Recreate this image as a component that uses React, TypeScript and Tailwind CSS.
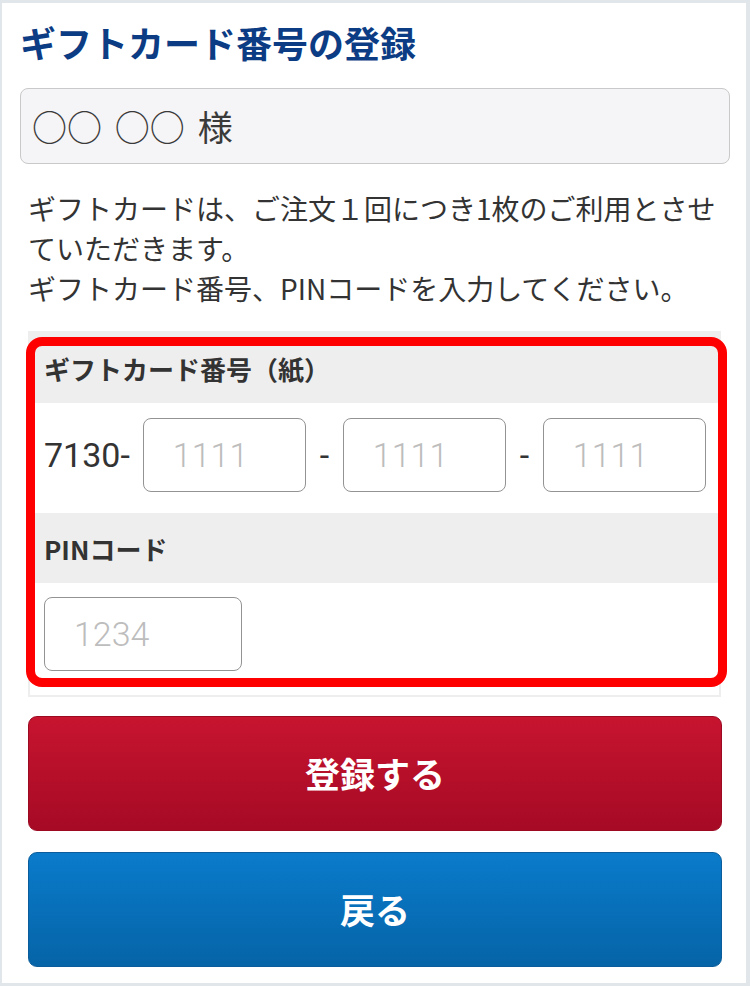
import React from 'react';

const jp = { fontFamily: '"Noto Sans CJK JP", "Noto Sans", sans-serif' };
const num = { fontFamily: 'Roboto, "Liberation Sans", "Noto Sans CJK JP", sans-serif' };

function CodeInput({ placeholder, width }: { placeholder: string; width: string }) {
  return (
    <input
      type="text"
      placeholder={placeholder}
      style={num}
      className={`${width} h-[74px] rounded-[8px] border-[1.5px] border-[#939393] bg-white pl-[29px] text-[34px] font-light text-[#333] outline-none placeholder:text-[#bdbdbd]`}
    />
  );
}

export default function App() {
  return (
    <div
      style={jp}
      className="w-[750px] h-[986px] bg-white border-t-[3px] border-l-2 border-r-[4px] border-b-[3px] border-[#e1e6ea] overflow-hidden"
    >
      <div className="pl-[18px] pr-[16px] pt-[15px]">
        <h1 className="text-[36px] leading-[48px] font-bold text-[#0c3c84]">ギフトカード番号の登録</h1>

        <div className="mt-[22px] h-[76px] rounded-[8px] border-[1.5px] border-[#c9c9c9] bg-[#f5f4f6] flex items-center pl-[11px]">
          <span className="text-[35px] text-[#3a3a3a] [word-spacing:5px]">○○ ○○ 様</span>
        </div>
      </div>

      <div className="pl-[26px] pr-[25px]">
        <p className="mt-[24px] text-[28px] leading-[40px] text-[#333] whitespace-nowrap">
          ギフトカードは、ご注文１回につき1枚のご利用とさせ
          <br />
          ていただきます。
          <br />
          ギフトカード番号、PINコードを入力してください。
        </p>

        <div className="relative mt-[23px] border-2 border-[#eeeeee] bg-white">
          <div className="h-[70px] bg-[#eeeeee] flex items-center pl-[14px]">
            <span className="text-[26px] font-bold text-[#333]">ギフトカード番号（紙）</span>
          </div>
          <div className="h-[110px] flex items-start pt-[15px] pl-[14px] gap-[13px]">
            <span style={num} className="h-[74px] flex items-center text-[34px] text-[#333] font-normal">7130-</span>
            <CodeInput placeholder="1111" width="w-[163px]" />
            <span style={num} className="w-[11px] h-[74px] flex items-center justify-center text-[34px] text-[#333]">-</span>
            <CodeInput placeholder="1111" width="w-[163px]" />
            <span style={num} className="w-[11px] h-[74px] flex items-center justify-center text-[34px] text-[#333]">-</span>
            <CodeInput placeholder="1111" width="w-[163px]" />
          </div>
          <div className="h-[70px] bg-[#eeeeee] flex items-center pl-[14px]">
            <span className="text-[26px] font-bold text-[#333]">PINコード</span>
          </div>
          <div className="h-[112px] pl-[14px] pt-[14px]">
            <CodeInput placeholder="1234" width="w-[198px]" />
          </div>

          {/* highlight frame */}
          <div className="pointer-events-none absolute left-[-4px] top-[4px] right-[-8px] bottom-[8px] rounded-[16px] border-[9px] border-[#ff0000]" />
        </div>

        <button className="mt-[19px] w-[694px] h-[115px] rounded-[9px] border border-[#9c0a22] bg-gradient-to-b from-[#c7142f] to-[#a60a25] text-white text-[35px] font-bold flex items-center justify-center">
          登録する
        </button>
        <button className="mt-[21px] w-[694px] h-[115px] rounded-[9px] border border-[#0a5c9a] bg-gradient-to-b from-[#0a7bcb] to-[#0664a7] text-white text-[35px] font-bold flex items-center justify-center">
          戻る
        </button>
      </div>
    </div>
  );
}
